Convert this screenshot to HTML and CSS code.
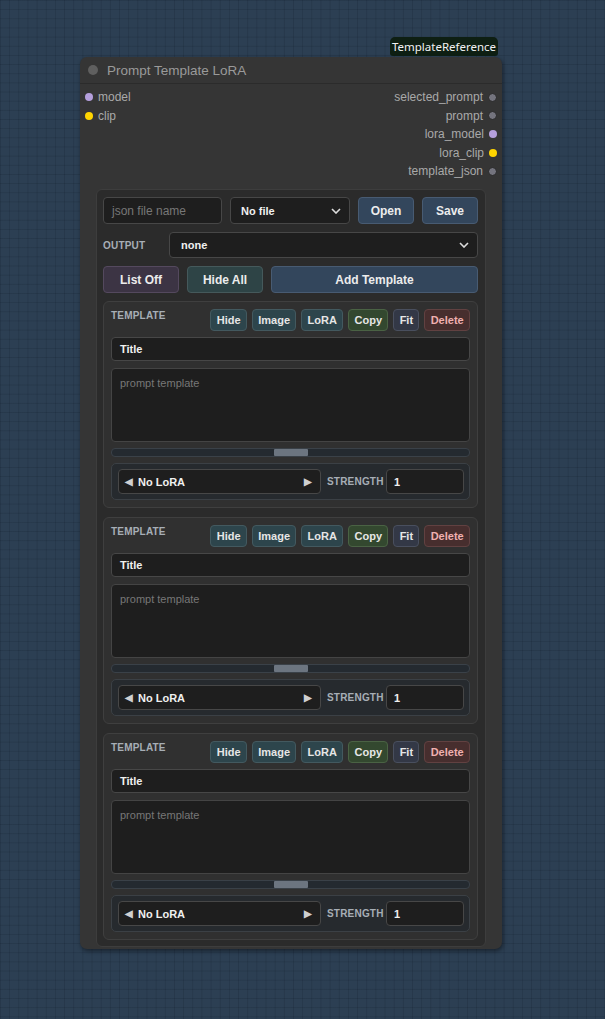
FILE: index.html
```html
<!DOCTYPE html>
<html>
<head>
<meta charset="utf-8">
<link rel="stylesheet" href="styles.css">
</head>
<body>
<div class="canvas">
  <div class="badge">TemplateReference</div>
  <div class="node">
    <div class="node-title"><span class="title-dot"></span><span class="title-text">Prompt Template LoRA</span></div>
    <div class="slots">
      <div class="slot-col inputs">
        <div class="slot"><span class="dot dot-model"></span>model</div>
        <div class="slot"><span class="dot dot-clip"></span>clip</div>
      </div>
      <div class="slot-col outputs">
        <div class="slot">selected_prompt<span class="dot dot-gray"></span></div>
        <div class="slot">prompt<span class="dot dot-gray"></span></div>
        <div class="slot">lora_model<span class="dot dot-model"></span></div>
        <div class="slot">lora_clip<span class="dot dot-clip"></span></div>
        <div class="slot">template_json<span class="dot dot-gray"></span></div>
      </div>
    </div>
    <div class="widget">
      <div class="file-row">
        <div class="field placeholder">json file name</div>
        <div class="field select"><span>No file</span><svg class="chev" viewBox="0 0 10 6" width="10" height="6"><path d="M1 1 L5 5 L9 1" fill="none" stroke="#ddd" stroke-width="1.6"/></svg></div>
        <div class="btn btn-blue">Open</div>
        <div class="btn btn-blue">Save</div>
      </div>
      <div class="output-row">
        <div class="label">OUTPUT</div>
        <div class="field select"><span>none</span><svg class="chev" viewBox="0 0 10 6" width="10" height="6"><path d="M1 1 L5 5 L9 1" fill="none" stroke="#ddd" stroke-width="1.6"/></svg></div>
      </div>
      <div class="action-row">
        <div class="btn btn-purple">List Off</div>
        <div class="btn btn-teal">Hide All</div>
        <div class="btn btn-blue">Add Template</div>
      </div>

      <div class="card">
        <div class="card-head">
          <div class="label card-label">TEMPLATE</div>
          <div class="tools">
            <div class="tbtn t-teal">Hide</div>
            <div class="tbtn t-teal">Image</div>
            <div class="tbtn t-teal">LoRA</div>
            <div class="tbtn t-green">Copy</div>
            <div class="tbtn t-slate">Fit</div>
            <div class="tbtn t-red">Delete</div>
          </div>
        </div>
        <div class="field title-field">Title</div>
        <div class="field prompt-area">prompt template</div>
        <div class="scrollbar"><div class="thumb"></div></div>
        <div class="lora-row">
          <div class="field lora-select"><span class="arrow">&#9664;</span><span class="lora-name">No LoRA</span><span class="arrow">&#9654;</span></div>
          <div class="label">STRENGTH</div>
          <div class="field strength">1</div>
        </div>
      </div>

      <div class="card">
        <div class="card-head">
          <div class="label card-label">TEMPLATE</div>
          <div class="tools">
            <div class="tbtn t-teal">Hide</div>
            <div class="tbtn t-teal">Image</div>
            <div class="tbtn t-teal">LoRA</div>
            <div class="tbtn t-green">Copy</div>
            <div class="tbtn t-slate">Fit</div>
            <div class="tbtn t-red">Delete</div>
          </div>
        </div>
        <div class="field title-field">Title</div>
        <div class="field prompt-area">prompt template</div>
        <div class="scrollbar"><div class="thumb"></div></div>
        <div class="lora-row">
          <div class="field lora-select"><span class="arrow">&#9664;</span><span class="lora-name">No LoRA</span><span class="arrow">&#9654;</span></div>
          <div class="label">STRENGTH</div>
          <div class="field strength">1</div>
        </div>
      </div>

      <div class="card">
        <div class="card-head">
          <div class="label card-label">TEMPLATE</div>
          <div class="tools">
            <div class="tbtn t-teal">Hide</div>
            <div class="tbtn t-teal">Image</div>
            <div class="tbtn t-teal">LoRA</div>
            <div class="tbtn t-green">Copy</div>
            <div class="tbtn t-slate">Fit</div>
            <div class="tbtn t-red">Delete</div>
          </div>
        </div>
        <div class="field title-field">Title</div>
        <div class="field prompt-area">prompt template</div>
        <div class="scrollbar"><div class="thumb"></div></div>
        <div class="lora-row">
          <div class="field lora-select"><span class="arrow">&#9664;</span><span class="lora-name">No LoRA</span><span class="arrow">&#9654;</span></div>
          <div class="label">STRENGTH</div>
          <div class="field strength">1</div>
        </div>
      </div>
    </div>
  </div>
</div>
</body>
</html>
```

FILE: styles.css
```css
* { box-sizing: border-box; }
html, body { margin: 0; padding: 0; }
body {
  width: 605px;
  height: 1019px;
  overflow: hidden;
  font-family: "Liberation Sans", Arial, sans-serif;
  background-color: #2c3f53;
  background-image:
    linear-gradient(to right, rgba(10, 20, 32, 0.16) 1px, transparent 1px),
    linear-gradient(to bottom, rgba(10, 20, 32, 0.16) 1px, transparent 1px);
  background-size: 9.17px 9.17px;
}
.canvas { position: relative; width: 605px; height: 1019px; }

.badge {
  position: absolute;
  left: 390px;
  top: 37px;
  width: 108px;
  height: 19px;
  background: #0e1f13;
  color: #f2f2f2;
  font-family: "Noto Sans", "Liberation Sans", sans-serif;
  font-size: 11.5px;
  line-height: 19px;
  text-align: center;
  border-radius: 5px 5px 3px 3px;
}

.node {
  position: absolute;
  left: 80px;
  top: 57px;
  width: 422px;
  background: #353535;
  border-radius: 7px;
  padding-bottom: 2px;
  box-shadow: 1px 2px 4px rgba(0, 0, 0, 0.45);
}
.node-title {
  height: 27px;
  display: flex;
  align-items: center;
  padding-left: 8px;
  border-bottom: 1px solid #2b2b2b;
}
.title-dot {
  width: 10px; height: 10px; border-radius: 50%;
  background: #5f5f5f;
  margin-right: 9px;
}
.title-text { color: #9a9a9a; font-size: 13.5px; }

.slots {
  display: flex;
  justify-content: space-between;
  padding-top: 4px;
}
.slot-col { display: flex; flex-direction: column; }
.slot {
  height: 18.5px;
  display: flex;
  align-items: center;
  font-size: 12px;
  color: #a9a9a9;
}
.inputs .slot { padding-left: 5px; }
.inputs .dot { margin-right: 5px; }
.outputs .slot { justify-content: flex-end; padding-right: 5px; }
.outputs .dot { margin-left: 5px; }
.dot { width: 8px; height: 8px; border-radius: 50%; display: inline-block; }
.dot-model { background: #b59fdc; }
.dot-clip { background: #ffd500; }
.dot-gray { width: 9px; height: 9px; background: #74747e; border: 1px solid #262626; }

.widget {
  margin: 8.5px 16px 0 16px;
  background: #2b2b2b;
  border: 1px solid #3d3d3d;
  border-radius: 6px;
  padding: 7px 7px 6px 6px;
  display: flex;
  flex-direction: column;
  gap: 8px;
}

.field {
  background: #1e1e1e;
  border: 1px solid #474747;
  border-radius: 4px;
  color: #f0f0f0;
  font-size: 11px;
  font-weight: bold;
  display: flex;
  align-items: center;
  padding: 0 10px;
}
.placeholder { color: #777; font-weight: normal; font-size: 12px; padding-left: 8px; }
.select { justify-content: space-between; }
.chev { display: block; }

.btn {
  border-radius: 4px;
  color: #ececec;
  font-size: 12px;
  font-weight: bold;
  display: flex;
  align-items: center;
  justify-content: center;
}
.btn-blue { background: #33465c; border: 1px solid #485b72; }
.btn-purple { background: #3c3444; border: 1px solid #54495e; }
.btn-teal { background: #2e4446; border: 1px solid #45595b; }

.file-row {
  display: grid;
  grid-template-columns: 119px 120px 56px 56px;
  gap: 8px;
  height: 27px;
}
.output-row {
  display: flex;
  height: 26px;
  gap: 8px;
  align-items: center;
}
.output-row .label { width: 58px; }
.output-row .select { flex: 1; height: 26px; padding-left: 11px; padding-right: 8px; }
.label {
  color: #a7aeb6;
  font-size: 10px;
  font-weight: bold;
  letter-spacing: 0.2px;
}
.action-row {
  display: grid;
  grid-template-columns: 76px 76px 1fr;
  gap: 8px;
  height: 27px;
}
.file-row .select { padding-right: 8px; }

.card {
  background: #303030;
  border: 1px solid #3f3f3f;
  border-radius: 6px;
  padding: 7px 7px 7px 7px;
  display: flex;
  flex-direction: column;
  height: 207px;
}
.card + .card { margin-top: 1px; }
.card-head {
  display: flex;
  justify-content: space-between;
  align-items: flex-start;
  height: 22px;
}
.card-label { padding-top: 1px; }
.tools { display: flex; gap: 5px; }
.tbtn {
  height: 22px;
  padding: 0 5.3px;
  border-radius: 4px;
  font-size: 11px;
  font-weight: bold;
  color: #e6e6e6;
  display: flex;
  align-items: center;
}
.t-teal { background: #2d454c; border: 1px solid #43595f; }
.t-green { background: #33482f; border: 1px solid #4a6244; }
.t-slate { background: #333846; border: 1px solid #494f5e; }
.t-red { background: #472e2e; border: 1px solid #614141; color: #efb0b0; }

.title-field { height: 24px; margin-top: 6px; padding-left: 8px; }
.prompt-area {
  height: 74px;
  margin-top: 7px;
  align-items: flex-start;
  padding: 8px 8px;
  color: #777;
  font-weight: normal;
  font-size: 11px;
  line-height: 12px;
  border-color: #444;
}
.scrollbar {
  height: 9px;
  margin-top: 6px;
  background: #242a30;
  border: 1px solid #3a4148;
  border-radius: 4px;
  display: flex;
  justify-content: center;
  align-items: center;
}
.thumb { width: 34px; height: 7px; background: #6c7580; border-radius: 1px; }

.lora-row {
  margin-top: 6px;
  height: 37px;
  background: #262a2e;
  border: 1px solid #3b4045;
  border-radius: 5px;
  display: flex;
  align-items: center;
  padding: 0 5px 0 6px;
}
.lora-select {
  width: 203px;
  height: 25px;
  padding: 0 8px 0 6px;
  font-size: 11px;
}
.lora-select .arrow { font-size: 10px; color: #d0d0d0; }
.lora-name { flex: 1; margin-left: 5px; }
.lora-row .label { margin-left: 6px; width: 59px; }
.strength { width: 78px; height: 25px; padding-left: 7px; }
```
